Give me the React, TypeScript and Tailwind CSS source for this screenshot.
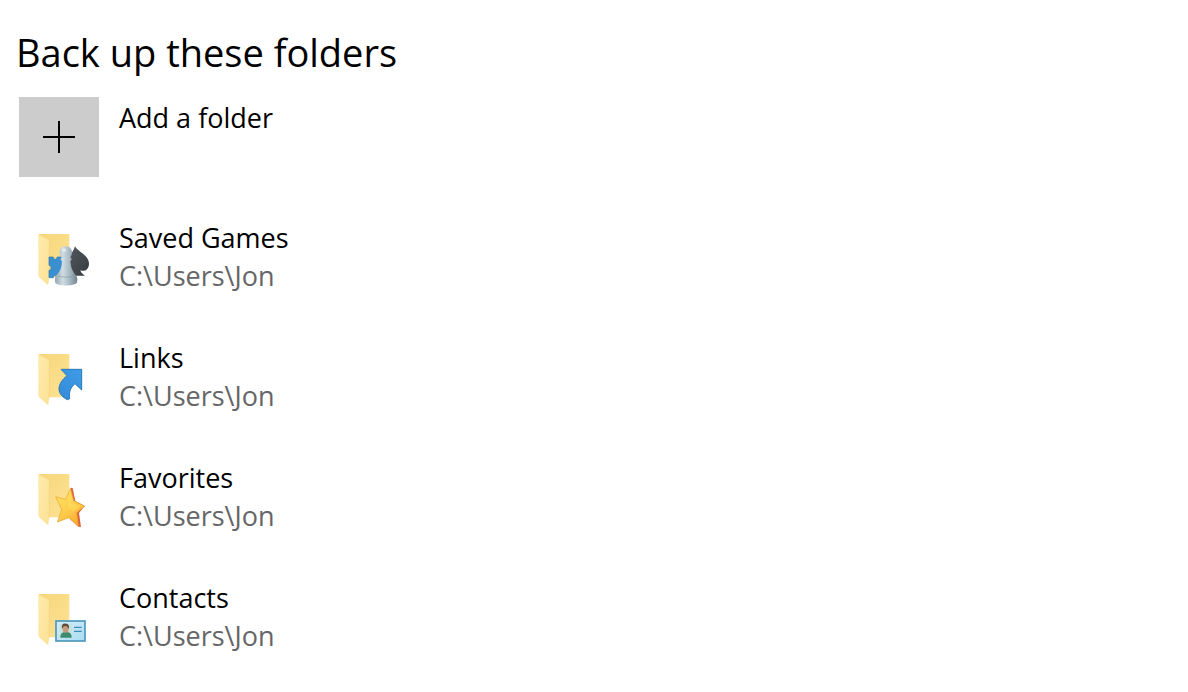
import type { ReactNode } from "react";

function FolderIcon({ children }: { children: ReactNode }) {
  return (
    <svg viewBox="-33 -24 240 240" className="h-20 w-20 shrink-0" aria-hidden="true">
      <defs>
        <linearGradient id="folder-back" x1="0" y1="0" x2="1" y2="1">
          <stop offset="0" stopColor="#f7d67c" />
          <stop offset="1" stopColor="#fde394" />
        </linearGradient>
        <linearGradient id="folder-front" x1="0" y1="0" x2="1" y2="1">
          <stop offset="0" stopColor="#ffebac" />
          <stop offset="1" stopColor="#fce196" />
        </linearGradient>
      </defs>
      <path d="M26 27H115Q118 27 118 30V157H54L27 100Z" fill="url(#folder-back)" />
      <path d="M25 28L52 43Q58 46 58 51V157L55 178Q54 181 51 178L27 157Q25 155 25 151Z" fill="url(#folder-front)" />
      <path d="M58 50V157" stroke="#f4d27d" strokeWidth="2" />
      {children}
    </svg>
  );
}

function SavedGamesArt() {
  return (
    <>
      <defs>
        <linearGradient id="pawn" x1="0" y1="0" x2="1" y2="0">
          <stop offset="0" stopColor="#93a5af" />
          <stop offset="0.35" stopColor="#d0dde3" />
          <stop offset="0.65" stopColor="#a8bac4" />
          <stop offset="1" stopColor="#71828c" />
        </linearGradient>
        <linearGradient id="spade" x1="0" y1="0" x2="1" y2="1">
          <stop offset="0" stopColor="#53595f" />
          <stop offset="1" stopColor="#353b41" />
        </linearGradient>
      </defs>
      <path d="M57 96H70C68 104 82 106 81 96H101V159H84C86 150 71 149 70 158H57V136C65 136 66 122 57 121Z" fill="#3c8fcf" stroke="#2b79ba" strokeWidth="2" />
      <path d="M135 64C143 80 177 91 177 116C177 134 163 141 151 136C153 143 158 148 165 152H118L122 126L116 92C127 84 131 76 135 64Z" fill="url(#spade)" />
      <path d="M107 64C119 64 126 72 126 82C126 90 123 94 120 97C126 99 126 106 121 109C122 127 128 139 136 149C142 154 144 163 140 174C132 184 84 184 76 174C73 162 75 154 82 148C91 138 95 126 96 109C90 106 91 99 96 97C91 93 88 89 89 81C90 70 97 64 107 64Z" fill="url(#pawn)" />
      <path d="M84 152C97 158 123 158 134 152" fill="none" stroke="#8a9ca6" strokeWidth="2" />
      <ellipse cx="102" cy="75" rx="7" ry="5" fill="#e8f0f3" opacity="0.8" />
    </>
  );
}

function LinksArt() {
  return (
    <>
      <defs>
        <linearGradient id="link-arrow" x1="1" y1="0" x2="0" y2="1">
          <stop offset="0" stopColor="#3f9ce8" />
          <stop offset="1" stopColor="#348bd8" />
        </linearGradient>
      </defs>
      <path d="M93 73H155V135L135 116C121 128 116 142 119 161L112 164C99 158 87 146 87 132C87 117 97 103 111 92Z" fill="url(#link-arrow)" stroke="#2779ba" strokeWidth="3" />
    </>
  );
}

function FavoritesArt() {
  return (
    <>
      <defs>
        <linearGradient id="star" x1="0" y1="0" x2="0.6" y2="1">
          <stop offset="0" stopColor="#ffe66e" />
          <stop offset="0.55" stopColor="#fdd04e" />
          <stop offset="1" stopColor="#f8ad32" />
        </linearGradient>
      </defs>
      <path d="M122 68L128 69L136 108L164 123L147 144L153 186L145 185L119 161Z" fill="#d9653a" />
      <path d="M121 70L131 107L164 123L140 143L145 184L117 158L82 171L95 134L77 95L107 103Z" fill="url(#star)" stroke="#eba42c" strokeWidth="2" />
      <path d="M117 88L124 113L151 124L129 139L113 130Z" fill="#ffdc5c" opacity="0.6" />
    </>
  );
}

function ContactsArt() {
  return (
    <>
      <defs>
        <linearGradient id="card" x1="0" y1="0" x2="1" y2="1">
          <stop offset="0" stopColor="#d6effb" />
          <stop offset="1" stopColor="#a9dbf1" />
        </linearGradient>
      </defs>
      <rect x="78" y="108" width="87" height="60" fill="url(#card)" stroke="#4d99bd" strokeWidth="5" />
      <rect x="88" y="116" width="38" height="42" fill="#c7e3df" />
      <path d="M91 158C91 146 96 142 104 141H111C120 142 125 146 125 158Z" fill="#3c8c70" />
      <ellipse cx="107" cy="131" rx="9" ry="12" fill="#c79b7c" />
      <path d="M96 132C94 119 99 115 107 116C115 116 119 121 116 131L110 123L101 124Z" fill="#5c4a40" />
      <path d="M132 127H155M132 139H155" stroke="#3c8dbb" strokeWidth="4" />
    </>
  );
}

const folders = [
  { name: "Saved Games", path: "C:\\Users\\Jon", art: <SavedGamesArt /> },
  { name: "Links", path: "C:\\Users\\Jon", art: <LinksArt /> },
  { name: "Favorites", path: "C:\\Users\\Jon", art: <FavoritesArt /> },
  { name: "Contacts", path: "C:\\Users\\Jon", art: <ContactsArt /> },
];

export default function App() {
  return (
    <main className="min-h-screen bg-white px-4 pt-6 font-['Open_Sans','Noto_Sans',sans-serif] text-black">
      <h1 className="text-[38px] leading-[57px]">Back up these folders</h1>

      <div className="mt-4 flex flex-col gap-10 pl-[3px]">
        <button type="button" className="flex items-start gap-5 self-start text-left">
          <span className="flex h-20 w-20 shrink-0 items-center justify-center bg-[#cccccc]">
            <svg viewBox="0 0 32 32" className="h-8 w-8" aria-hidden="true">
              <path d="M16 0V32M0 16H32" stroke="currentColor" strokeWidth="2" />
            </svg>
          </span>
          <span className="pt-[2px] text-[27px] leading-[38px]">Add a folder</span>
        </button>

        <ul className="flex flex-col gap-10">
          {folders.map((folder) => (
            <li key={folder.name}>
              <button type="button" className="flex items-start gap-5 text-left">
                <FolderIcon>{folder.art}</FolderIcon>
                <span className="flex flex-col pt-[2px] text-[27px] leading-[38px]">
                  <span>{folder.name}</span>
                  <span className="text-[#666666]">{folder.path}</span>
                </span>
              </button>
            </li>
          ))}
        </ul>
      </div>
    </main>
  );
}
